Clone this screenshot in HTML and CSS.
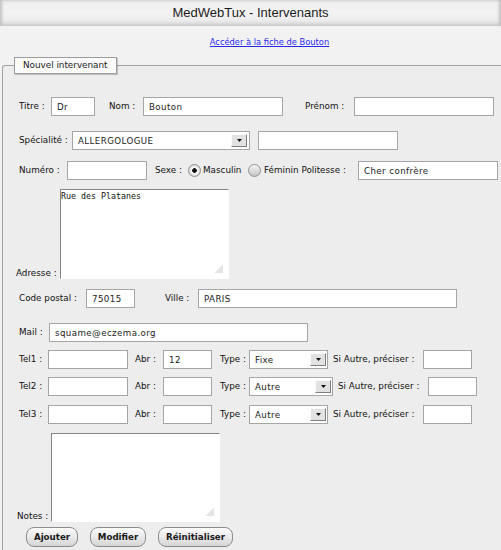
FILE: index.html
```html
<!DOCTYPE html>
<html lang="fr">
<head>
<meta charset="utf-8">
<title>MedWebTux - Intervenants</title>
<link rel="stylesheet" href="styles.css">
</head>
<body>
<div class="titlebar">MedWebTux - Intervenants</div>
<div class="linkrow"><a href="#">Accéder à la fiche de Bouton</a></div>
<fieldset class="panel">
  <legend class="legend">Nouvel intervenant</legend>

  <div class="row r1">
    <span class="lbl w32">Titre :</span>
    <input class="inp w44" value="Dr">
    <span class="lbl ml14 w34">Nom :</span>
    <input class="inp w140" value="Bouton">
    <span class="lbl ml22 w49">Prénom :</span>
    <input class="inp w140" value="">
  </div>

  <div class="row r2">
    <span class="lbl w53">Spécialité :</span>
    <div class="select w178"><span>ALLERGOLOGUE</span><span class="sbtn"><svg width="5" height="3" viewBox="0 0 5 3"><polygon points="0,0 5,0 2.5,3" fill="#111"/></svg></span></div>
    <input class="inp ml8 w140" value="">
  </div>

  <div class="row r3">
    <span class="lbl w48">Numéro :</span>
    <input class="inp w80" value="">
    <span class="lbl ml8 w33">Sexe :</span>
    <span class="radio on"></span>
    <span class="lbl ml2 w45">Masculin</span>
    <span class="radio"></span>
    <span class="lbl ml3 w94">Féminin Politesse :</span>
    <input class="inp w140" value="Cher confrère">
  </div>

  <div class="row tarow r4">
    <span class="lbl w44">Adresse :</span>
    <div class="tawrap">
      <textarea class="ta tah90">Rue des Platanes</textarea>
      <span class="grip"></span>
    </div>
  </div>

  <div class="row r5">
    <span class="lbl w67">Code postal :</span>
    <input class="inp w49" value="75015">
    <span class="lbl ml30 w33">Ville :</span>
    <input class="inp w259" value="PARIS">
  </div>

  <div class="row r6">
    <span class="lbl w30">Mail :</span>
    <input class="inp w259" value="squame@eczema.org">
  </div>

  <div class="row r7">
    <span class="lbl w29">Tel1 :</span>
    <input class="inp w80" value="">
    <span class="lbl ml7 w28">Abr :</span>
    <input class="inp w49" value="12">
    <span class="lbl ml8 w29">Type :</span>
    <div class="select w79"><span>Fixe</span><span class="sbtn"><svg width="5" height="3" viewBox="0 0 5 3"><polygon points="0,0 5,0 2.5,3" fill="#111"/></svg></span></div>
    <span class="lbl ml5 w90">Si Autre, préciser :</span>
    <input class="inp w49" value="">
  </div>

  <div class="row r8">
    <span class="lbl w29">Tel2 :</span>
    <input class="inp w80" value="">
    <span class="lbl ml7 w28">Abr :</span>
    <input class="inp w49" value="">
    <span class="lbl ml8 w29">Type :</span>
    <div class="select w84"><span>Autre</span><span class="sbtn"><svg width="5" height="3" viewBox="0 0 5 3"><polygon points="0,0 5,0 2.5,3" fill="#111"/></svg></span></div>
    <span class="lbl ml5 w90">Si Autre, préciser :</span>
    <input class="inp w49" value="">
  </div>

  <div class="row r9">
    <span class="lbl w29">Tel3 :</span>
    <input class="inp w80" value="">
    <span class="lbl ml7 w28">Abr :</span>
    <input class="inp w49" value="">
    <span class="lbl ml8 w29">Type :</span>
    <div class="select w79"><span>Autre</span><span class="sbtn"><svg width="5" height="3" viewBox="0 0 5 3"><polygon points="0,0 5,0 2.5,3" fill="#111"/></svg></span></div>
    <span class="lbl ml5 w90">Si Autre, préciser :</span>
    <input class="inp w49" value="">
  </div>

  <div class="row tarow notesrow r10">
    <span class="lbl w34">Notes :</span>
    <div class="tawrap">
      <textarea class="ta tah89"></textarea>
      <span class="grip"></span>
    </div>
  </div>

  <div class="row btnrow r11">
    <button class="btn w52">Ajouter</button>
    <button class="btn w56">Modifier</button>
    <button class="btn w75">Réinitialiser</button>
  </div>
</fieldset>
</body>
</html>
```

FILE: styles.css
```css
* { box-sizing: border-box; }
html, body { margin: 0; padding: 0; }
body {
  width: 501px;
  height: 550px;
  overflow: hidden;
  background: #f2f2f2;
  font-family: "DejaVu Sans", sans-serif;
  font-size: 8.8px;
  color: #111;
}
.titlebar {
  height: 26px;
  line-height: 26px;
  text-align: center;
  font-family: "Liberation Sans", Arial, sans-serif;
  font-size: 13px;
  color: #1c1c1c;
  background: linear-gradient(#dcdcdc 0, #efefef 3px, #f3f3f3 50%, #ebebeb 80%, #cdcdcd 100%);
  box-shadow: inset 3px 0 3px -1px #c2c2c2, inset -3px 0 3px -1px #c2c2c2;
}
.linkrow {
  height: 31px;
  padding-top: 10px;
  padding-left: 38px;
  line-height: 12px;
  text-align: center;
}
.linkrow a {
  font-size: 8.3px;
  color: #2a2aee;
  text-decoration: underline;
}
.panel {
  margin: 0 0 0 2px;
  padding: 0;
  border: 1px solid #a3a3a3;
  border-right: 0;
  border-bottom: 0;
  border-radius: 3px 0 0 0;
  width: 499px;
  height: 493px;
  background: #ededed;
  min-width: 0;
}
.legend {
  margin-left: 11px;
  padding: 0 8px;
  height: 17px;
  line-height: 15px;
  border: 1px solid #9c9c9c;
  background: #fbfbfb;
  box-shadow: 1px 1px 1px rgba(0,0,0,.18);
  font-size: 8.8px;
  color: #1a1a1a;
}
.row {
  display: flex;
  align-items: center;
  padding-left: 16px;
  height: 19px;
}
.r1 { margin-top: 23px; }
.r2 { margin-top: 15px; }
.r3 { margin-top: 11px; }
.r4 { margin-top: 9px; height: 90px; }
.r5 { margin-top: 10px; }
.r6 { margin-top: 15px; }
.r7 { margin-top: 8px; }
.r8 { margin-top: 8px; }
.r9 { margin-top: 9px; }
.r10 { margin-top: 9px; height: 89px; }
.r11 { margin-top: 5px; height: 20px; }

.tarow { align-items: flex-end; padding-left: 13px; }
.notesrow { padding-left: 14px; }
.tarow .lbl { line-height: 12px; }

.lbl { flex: none; white-space: nowrap; line-height: 19px; }
.inp {
  flex: none;
  height: 19px;
  border: 1px solid #a5a5a5;
  background: #fff;
  padding: 0 5px;
  margin-top: 0;
  margin-bottom: 0;
  font-family: "DejaVu Sans", sans-serif;
  font-size: 8.7px;
  letter-spacing: .4px;
  color: #222;
  outline: none;
}
.select {
  flex: none;
  display: flex;
  align-items: center;
  justify-content: space-between;
  height: 19px;
  border: 1px solid #a5a5a5;
  background: #fff;
  padding: 0 1px 0 5px;
  font-size: 8.7px;
  letter-spacing: .4px;
  color: #222;
}
.w178 { padding-right: 2px; }
.sbtn {
  width: 16px;
  height: 13px;
  background: #e2e2e2;
  border: 1px solid;
  border-color: #fafafa #7d7d7d #7d7d7d #fafafa;
  display: flex;
  align-items: center;
  justify-content: center;
}
.sbtn svg { display: block; }
.radio {
  flex: none;
  width: 13px;
  height: 13px;
  border-radius: 50%;
  border: 1px solid #8f8f8f;
  background: linear-gradient(#f6f6f6, #c4c4c4);
}
.radio.on {
  background: radial-gradient(circle at center, #111 0 2px, #f8f8f8 2.6px 3.4px, #d4d4d4 5.5px);
}
.tawrap { position: relative; flex: none; }
.ta {
  display: block;
  width: 169px;
  margin: 0;
  padding: 1px 0 0 0;
  border: 1px solid;
  border-color: #858585 #fff #fff #858585;
  background: #fff;
  resize: none;
  font-family: "DejaVu Sans Mono", monospace;
  font-size: 8.3px;
  line-height: 10px;
  color: #111;
  outline: none;
}
.tah90 { height: 90px; }
.tah89 { height: 89px; }
.grip {
  position: absolute;
  right: 6px;
  bottom: 6px;
  width: 8px;
  height: 8px;
  background: linear-gradient(135deg, transparent 50%, #e4e4e4 50%);
}
.btnrow { padding-left: 23px; gap: 12px; }
.btn {
  flex: none;
  height: 20px;
  padding: 0;
  border: 1px solid #8c8c8c;
  border-radius: 8px;
  background: linear-gradient(#fbfbfb, #e8e8e8 55%, #d5d5d5);
  font-family: "DejaVu Sans", sans-serif;
  font-weight: bold;
  font-size: 8.7px;
  color: #1a1a1a;
}

.ml2 { margin-left: 2px; }
.ml3 { margin-left: 3px; }
.ml5 { margin-left: 5px; }
.ml7 { margin-left: 7px; }
.ml8 { margin-left: 8px; }
.ml14 { margin-left: 14px; }
.ml22 { margin-left: 22px; }
.ml30 { margin-left: 30px; }

.w28 { width: 28px; }
.w29 { width: 29px; }
.w30 { width: 30px; }
.w32 { width: 32px; }
.w33 { width: 33px; }
.w34 { width: 34px; }
.w44 { width: 44px; }
.w45 { width: 45px; }
.w48 { width: 48px; }
.w49 { width: 49px; }
.w52 { width: 52px; }
.w53 { width: 53px; }
.w56 { width: 56px; }
.w67 { width: 67px; }
.w75 { width: 75px; }
.w79 { width: 79px; }
.w80 { width: 80px; }
.w84 { width: 84px; }
.w90 { width: 90px; }
.w94 { width: 94px; }
.w140 { width: 140px; }
.w178 { width: 178px; }
.w259 { width: 259px; }
```
